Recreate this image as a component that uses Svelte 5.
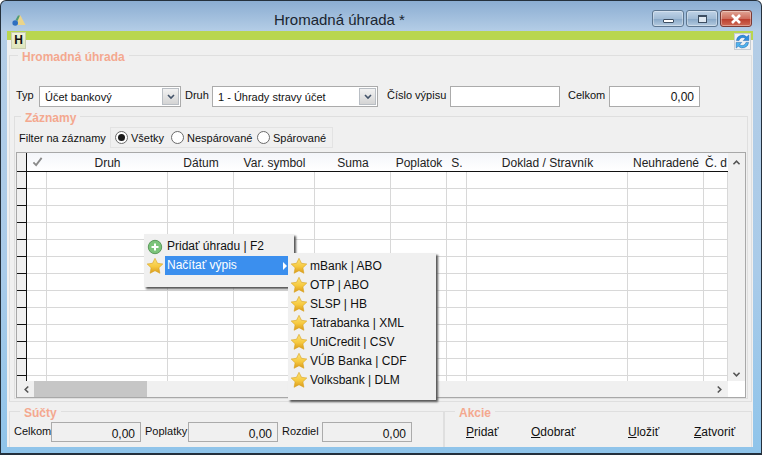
<script>
	const columns = [
		{ label: 'Druh', width: 121 },
		{ label: 'Dátum', width: 66 },
		{ label: 'Var. symbol', width: 81 },
		{ label: 'Suma', width: 76 },
		{ label: 'Poplatok', width: 56 },
		{ label: 'S.', width: 20 },
		{ label: 'Doklad / Stravník', width: 161 },
		{ label: 'Neuhradené', width: 76 },
		{ label: 'Č. d', width: 24 }
	];
	const rows = Array.from({ length: 12 });
	const banks = ['mBank | ABO', 'OTP | ABO', 'SLSP | HB', 'Tatrabanka | XML', 'UniCredit | CSV', 'VÚB Banka | CDF', 'Volksbank | DLM'];
	const starPoints = '8,0.3 10.5,5.3 15.8,6 11.9,9.8 12.9,15.3 8,12.7 3.1,15.3 4.1,9.8 0.2,6 5.5,5.3';
</script>

{#snippet star()}
	<svg class="star" viewBox="0 0 16 16" width="16" height="16">
		<polygon points={starPoints} fill="url(#starFill)" stroke="#d9a21e" stroke-width="0.6" />
	</svg>
{/snippet}

<svg class="defs" width="0" height="0">
	<defs>
		<linearGradient id="starFill" x1="0" y1="0" x2="0" y2="1">
			<stop offset="0" stop-color="#fbe27a" />
			<stop offset="0.55" stop-color="#f6c93f" />
			<stop offset="1" stop-color="#d9981a" />
		</linearGradient>
	</defs>
</svg>

<div class="window">
	<header class="titlebar">
		<svg class="app-icon" viewBox="0 0 14 11" width="14" height="11">
			<polygon points="6,0.5 8.5,0.5 13.5,10 5,10" fill="#ead48a" />
			<polygon points="6,0.5 8,0.5 5.5,6 3.5,5" fill="#4f9a78" />
			<circle cx="3.2" cy="8" r="2.8" fill="#2f6fc0" />
		</svg>
		<h1>Hromadná úhrada *</h1>
		<div class="controls">
			<div class="ctl">
				<span class="min-glyph"></span>
			</div>
			<div class="ctl">
				<span class="max-glyph"></span>
			</div>
			<div class="ctl close">
				<svg viewBox="0 0 12 10" width="12" height="10">
					<path d="M2 1 L10 9 M10 1 L2 9" stroke="#fff" stroke-width="2.6" />
				</svg>
			</div>
		</div>
	</header>

	<div class="client">
		<div class="strip"></div>
		<div class="tab">H</div>
		<div class="refresh">
			<svg viewBox="0 0 16 16" width="15" height="15">
				<path d="M1.5 7 A6.5 6.5 0 0 1 12.5 3 L14.8 1 V7 H8.8 L11 4.8 A4 4 0 0 0 4.3 7 Z" fill="#2f8fe0" stroke="#1c5fa8" stroke-width="0.5" />
				<path d="M14.5 9 A6.5 6.5 0 0 1 3.5 13 L1.2 15 V9 H7.2 L5 11.2 A4 4 0 0 0 11.7 9 Z" fill="#4fb4ee" stroke="#1c5fa8" stroke-width="0.5" />
			</svg>
		</div>

		<fieldset class="main-group">
			<legend>Hromadná úhrada</legend>

			<div class="head-row">
				<span class="lbl typ">Typ</span>
				<div class="select typ-select">
					<span>Účet bankový</span>
					<i class="drop"><svg viewBox="0 0 8 6" width="8" height="6"><path d="M1 1 L4 4 L7 1" fill="none" stroke="#44546a" stroke-width="1.6" /></svg></i>
				</div>
				<span class="lbl druh">Druh</span>
				<div class="select druh-select">
					<span>1 - Úhrady stravy účet</span>
					<i class="drop"><svg viewBox="0 0 8 6" width="8" height="6"><path d="M1 1 L4 4 L7 1" fill="none" stroke="#44546a" stroke-width="1.6" /></svg></i>
				</div>
				<span class="lbl cislo">Číslo výpisu</span>
				<div class="input cislo-input"></div>
				<span class="lbl celkom">Celkom</span>
				<div class="input celkom-input">0,00</div>
			</div>

			<fieldset class="records">
				<legend>Záznamy</legend>

				<div class="filter-row">
					<span class="filter-label">Filter na záznamy</span>
					<div class="radios">
						<span class="radio on"><b></b></span><span class="radio-text all">Všetky</span>
						<span class="radio"></span><span class="radio-text unpaired">Nespárované</span>
						<span class="radio"></span><span class="radio-text">Spárované</span>
					</div>
				</div>

				<div class="grid">
					<div class="grid-body">
						<div class="row-heads">
							<div class="corner"></div>
							{#each rows as _}
								<div class="row-head"></div>
							{/each}
						</div>
						<div class="cols">
							<div class="col check-col">
								<div class="th">
									<svg viewBox="0 0 12 12" width="11" height="11">
										<path d="M1.5 7 L4.5 10 L10.5 2" fill="none" stroke="#8a8a8a" stroke-width="2" />
									</svg>
								</div>
								{#each rows as _}
									<div class="td"></div>
								{/each}
							</div>
							{#each columns as col}
								<div class="col" style="width: {col.width}px">
									<div class="th">{col.label}</div>
									{#each rows as _}
										<div class="td"></div>
									{/each}
								</div>
							{/each}
						</div>
						<div class="vscroll">
							<svg viewBox="0 0 10 8" width="9" height="7"><path d="M1.5 6 L5 2.5 L8.5 6" fill="none" stroke="#555" stroke-width="1.8" /></svg>
							<svg viewBox="0 0 10 8" width="9" height="7"><path d="M1.5 2 L5 5.5 L8.5 2" fill="none" stroke="#555" stroke-width="1.8" /></svg>
						</div>
					</div>
					<div class="hscroll">
						<svg class="arrow-left" viewBox="0 0 8 10" width="7" height="9"><path d="M6 1.5 L2.5 5 L6 8.5" fill="none" stroke="#555" stroke-width="1.8" /></svg>
						<div class="thumb"></div>
						<svg class="arrow-right" viewBox="0 0 8 10" width="7" height="9"><path d="M2 1.5 L5.5 5 L2 8.5" fill="none" stroke="#555" stroke-width="1.8" /></svg>
					</div>
				</div>
			</fieldset>
		</fieldset>

		<div class="bottom">
			<fieldset class="totals">
				<legend>Súčty</legend>
				<span class="lbl t1">Celkom</span>
				<div class="input readonly">0,00</div>
				<span class="lbl t2">Poplatky</span>
				<div class="input readonly">0,00</div>
				<span class="lbl t3">Rozdiel</span>
				<div class="input readonly">0,00</div>
			</fieldset>
			<fieldset class="actions">
				<legend>Akcie</legend>
				<span class="action a1"><u>P</u>ridať</span>
				<span class="action a2"><u>O</u>dobrať</span>
				<span class="action a3"><u>U</u>ložiť</span>
				<span class="action a4"><u>Z</u>atvoriť</span>
			</fieldset>
		</div>
	</div>

	<div class="menu">
		<div class="menu-item">
			<svg class="star" viewBox="0 0 16 16" width="16" height="16">
				<circle cx="8" cy="8" r="6.7" fill="#7cc47a" stroke="#5c9a5c" />
				<path d="M8 4.5 V11.5 M4.5 8 H11.5" stroke="#fff" stroke-width="2" />
			</svg>
			<span>Pridať úhradu | F2</span>
		</div>
		<div class="menu-item">
			{@render star()}
			<span class="active">Načítať výpis<em></em></span>
		</div>
		<div class="menu-pad"></div>
	</div>

	<div class="submenu">
		{#each banks as bank}
			<div class="sub-item">
				{@render star()}
				<span>{bank}</span>
			</div>
		{/each}
	</div>
</div>

<style>
	:global(body) {
		margin: 0;
		background: #fff;
	}

	.defs {
		position: absolute;
	}

	.window {
		position: relative;
		width: 762px;
		height: 455px;
		box-sizing: border-box;
		display: flex;
		flex-direction: column;
		overflow: hidden;
		border: 1px solid #24303c;
		border-bottom-width: 2px;
		border-radius: 6px 6px 0 0;
		background: linear-gradient(180deg, #8badd2 0, #b4cde6 30px, #a9cbe9 60%, #8fc4ea 100%);
		font-family: 'Liberation Sans', Arial, sans-serif;
		font-size: 11px;
		color: #111;
	}

	.titlebar {
		height: 30px;
		flex: none;
		display: flex;
		align-items: center;
		padding-left: 11px;
		position: relative;
	}

	.app-icon {
		margin-top: 8px;
	}

	h1 {
		margin: 6px 0 0 248px;
		font-size: 15px;
		font-weight: normal;
		color: #1a2530;
	}

	.controls {
		margin-left: auto;
		margin-right: 9px;
		margin-top: 5px;
		display: flex;
		gap: 2px;
	}

	.ctl {
		width: 30px;
		height: 15px;
		display: flex;
		align-items: center;
		justify-content: center;
		border: 1px solid #5d7690;
		border-radius: 3px;
		background: linear-gradient(180deg, #c0d3e7 0, #a2bcd6 50%, #8aa9c8 55%, #b5cbe0 100%);
		box-shadow: inset 0 0 0 1px rgba(255, 255, 255, 0.35);
	}

	.min-glyph {
		width: 9px;
		height: 2px;
		margin-top: 4px;
		background: #fff;
		border: 1px solid #3d4e62;
		border-radius: 1px;
	}

	.max-glyph {
		width: 7px;
		height: 5px;
		background: #dfe8f1;
		border: 1px solid #3d4e62;
		border-width: 2px 1px 1px;
		box-sizing: content-box;
	}

	.close {
		border-color: #7b3a34;
		background: linear-gradient(180deg, #e0a595 0, #cf6f5e 50%, #bb3f2e 55%, #cf6a55 100%);
	}

	.client {
		position: relative;
		flex: none;
		width: 746px;
		height: 416px;
		margin-left: 6px;
		background: #f0f0f0;
	}

	.strip {
		height: 9px;
		background: #b9d64f;
	}

	.tab {
		position: absolute;
		left: 4px;
		top: 1px;
		width: 13px;
		height: 15px;
		border: 1px solid #c9cdb0;
		background: linear-gradient(180deg, #eef2d8, #dfe6bd);
		font-weight: bold;
		font-size: 12px;
		line-height: 15px;
		text-align: center;
	}

	.refresh {
		position: absolute;
		right: 2px;
		top: 2px;
		width: 15px;
		height: 15px;
		border: 1px solid #c6ccd2;
		background: #eef1f4;
		display: flex;
		align-items: center;
		justify-content: center;
	}

	fieldset {
		margin: 0;
		min-width: 0;
		box-sizing: border-box;
		border: 1px solid #dfdfdf;
	}

	legend {
		padding: 4px 4px 0;
		font-size: 12px;
		font-weight: bold;
		line-height: 14px;
		color: #f4a88f;
	}

	.main-group {
		margin: 6px 1px 0 2px;
		height: 356px;
		padding: 0 3px 0 4px;
	}

	.main-group > legend {
		margin-left: 4px;
	}

	.head-row {
		height: 21px;
		margin-top: 22px;
		display: flex;
		align-items: center;
	}

	.lbl {
		font-size: 11px;
		white-space: nowrap;
		margin-top: -3px;
	}

	.typ {
		margin-left: 2px;
		width: 23px;
	}

	.select {
		box-sizing: border-box;
		height: 21px;
		border: 1px solid #ababab;
		background: #fff;
		display: flex;
		align-items: center;
		font-size: 11px;
		padding-left: 5px;
	}

	.select span {
		flex: 1;
		white-space: nowrap;
	}

	.drop {
		width: 17px;
		height: 17px;
		margin-right: 1px;
		border: 1px solid #b9bec4;
		box-sizing: border-box;
		background: linear-gradient(180deg, #f2f2f2, #d4d4d4);
		display: flex;
		align-items: center;
		justify-content: center;
	}

	.typ-select {
		width: 142px;
	}

	.druh {
		margin-left: 4px;
		width: 27px;
	}

	.druh-select {
		width: 166px;
	}

	.cislo {
		margin-left: 9px;
		width: 63px;
	}

	.input {
		box-sizing: border-box;
		height: 21px;
		border: 1px solid #ababab;
		background: #fff;
		font-size: 12px;
		line-height: 21px;
		text-align: right;
		padding-right: 5px;
	}

	.cislo-input {
		width: 110px;
	}

	.celkom {
		margin-left: 8px;
		width: 41px;
	}

	.celkom-input {
		width: 91px;
	}

	.records {
		height: 292px;
		padding: 0 1px;
	}

	.records > legend {
		margin-left: 5px;
	}

	.filter-row {
		display: flex;
		align-items: center;
		height: 21px;
		margin-top: 2px;
		padding-left: 3px;
	}

	.filter-label {
		width: 91px;
		font-size: 11px;
	}

	.radios {
		display: flex;
		align-items: center;
		width: 223px;
		height: 21px;
		box-sizing: border-box;
		padding-left: 4px;
		border: 1px solid #e3e3e3;
		font-size: 11px;
	}

	.radio {
		box-sizing: border-box;
		flex: none;
		width: 13px;
		height: 13px;
		margin-right: 3px;
		border: 1px solid #6b6b6b;
		border-radius: 50%;
		background: #fff;
		display: flex;
		align-items: center;
		justify-content: center;
	}

	.radio b {
		width: 7px;
		height: 7px;
		border-radius: 50%;
		background: #1a1a1a;
	}

	.radio-text {
		white-space: nowrap;
	}

	.all {
		width: 40px;
	}

	.unpaired {
		width: 70px;
	}

	.grid {
		width: 730px;
		height: 246px;
		margin-top: 4px;
		box-sizing: border-box;
		border: 1px solid #a8a8a8;
		background: #fff;
		display: flex;
		flex-direction: column;
	}

	.grid-body {
		height: 228px;
		flex: none;
		display: flex;
		overflow: hidden;
	}

	.row-heads {
		width: 9px;
		flex: none;
		background: #f0f0f0;
		border-right: 1px solid #111;
	}

	.corner {
		height: 18px;
		border-bottom: 1px solid #111;
	}

	.row-head {
		height: 16px;
		border-bottom: 1px solid #111;
	}

	.cols {
		display: flex;
		flex: none;
		width: 701px;
		overflow: hidden;
	}

	.col {
		flex: none;
		box-sizing: border-box;
		border-right: 1px solid #d8d8d8;
	}

	.check-col {
		width: 20px;
	}

	.th {
		height: 18px;
		box-sizing: content-box;
		border-bottom: 1px solid #111;
		margin-right: -1px;
		font-size: 12px;
		line-height: 20px;
		text-align: center;
		white-space: nowrap;
		overflow: hidden;
		color: #222;
		background: linear-gradient(180deg, #f4f6fa, #fff);
	}

	.td {
		height: 16px;
		border-bottom: 1px solid #d8d8d8;
		margin-right: -1px;
	}

	.vscroll {
		flex: 1;
		background: #f0f0f0;
		display: flex;
		flex-direction: column;
		justify-content: space-between;
		align-items: center;
		padding: 6px 0 3px;
	}

	.hscroll {
		width: 711px;
		height: 16px;
		flex: none;
		display: flex;
		align-items: center;
		background: #f0f0f0;
		padding-left: 6px;
		box-sizing: border-box;
	}

	.thumb {
		width: 113px;
		height: 16px;
		margin-left: 4px;
		background: #c6c6c6;
	}

	.arrow-right {
		margin-left: 569px;
	}

	.bottom {
		display: flex;
		margin: 0 1px 0 2px;
	}

	.totals,
	.actions {
		height: 45px;
		display: flex;
		align-items: center;
		padding: 0 0 3px;
		border-bottom: none;
	}

	.totals {
		width: 435px;
		padding-left: 4px;
	}

	.totals > legend {
		margin-left: 6px;
	}

	.actions > legend {
		margin-left: 10px;
	}

	.readonly {
		width: 90px;
		height: 20px;
		line-height: 22px;
		background: #f0f0f0;
	}

	.t1 {
		width: 37px;
	}

	.t2 {
		margin-left: 4px;
		width: 43px;
	}

	.t3 {
		margin-left: 4px;
		width: 40px;
	}

	.actions {
		flex: 1;
		font-size: 12px;
	}

	.action {
		white-space: nowrap;
	}

	.a1 {
		margin-left: 21px;
		width: 65px;
	}

	.a2 {
		width: 97px;
	}

	.a3 {
		width: 66px;
	}

	.menu,
	.submenu {
		position: absolute;
		box-sizing: border-box;
		background: #f0f0f0;
		font-size: 12px;
		box-shadow: 2px 2px 2px #555;
	}

	.menu {
		left: 143px;
		top: 233px;
		width: 150px;
		padding: 3px 0 0 3px;
	}

	.menu-item,
	.sub-item {
		display: flex;
		align-items: center;
		height: 19px;
		white-space: nowrap;
	}

	.star {
		flex: none;
		margin-right: 3px;
	}

	.menu-item .star {
		margin-right: 2px;
	}

	.menu-item span {
		flex: 1;
		height: 19px;
		line-height: 19px;
		padding-left: 2px;
	}

	.active {
		position: relative;
		background: #3b8fee;
		color: #fff;
	}

	.active em {
		position: absolute;
		right: 7px;
		top: 6px;
		border-left: 4px solid #fff;
		border-top: 4px solid transparent;
		border-bottom: 4px solid transparent;
	}

	.menu-pad {
		height: 12px;
	}

	.submenu {
		left: 287px;
		top: 252px;
		width: 148px;
		height: 147px;
		padding: 3px 0 0 3px;
	}
</style>
